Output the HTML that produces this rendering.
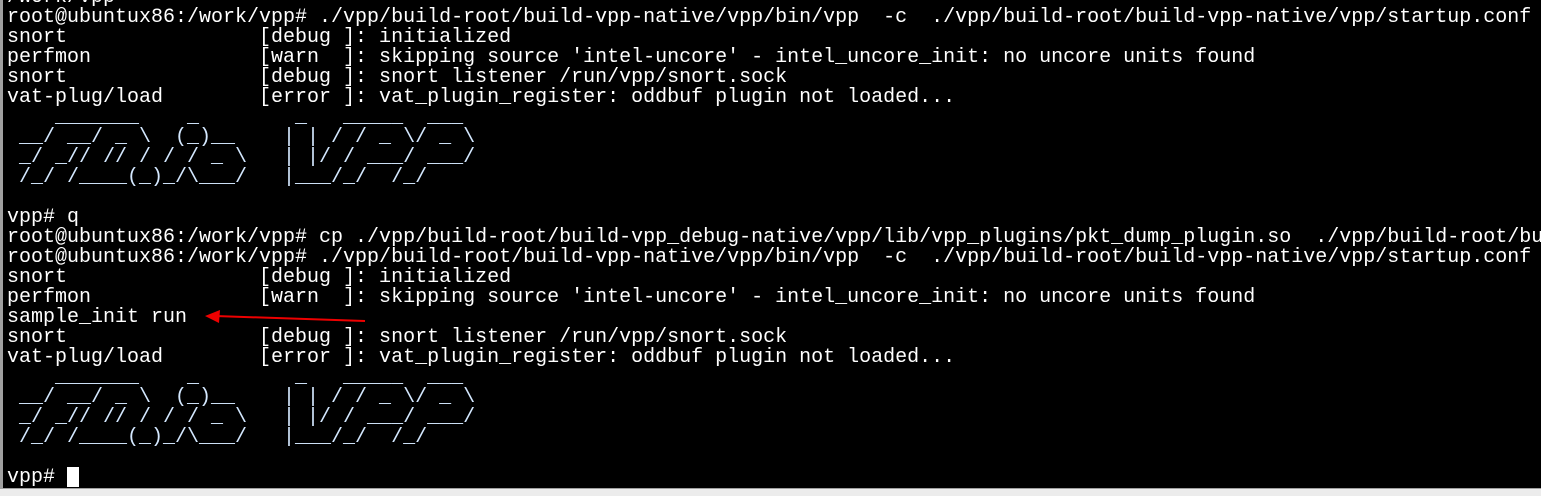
<!DOCTYPE html>
<html><head><meta charset="utf-8"><style>
html,body{margin:0;padding:0;background:#000;width:1541px;height:496px;overflow:hidden;position:relative}
pre{position:absolute;left:7px;top:-12px;margin:0;font-family:"Liberation Mono",monospace;font-size:20px;line-height:20px;color:#fff;white-space:pre}
.a{color:#d4e8ff}
#lb{position:absolute;left:0;top:0;width:3px;height:488px;background:#a0a0a0}
#bb{position:absolute;left:0;top:488px;width:1541px;height:8px;background:#ececec;border-top:1px solid #a0a0a0}
#cur{position:absolute;left:67px;top:467px;width:12px;height:20px;background:#fff}
svg{position:absolute;left:0;top:0}
</style></head><body>
<div id="lb"></div>
<pre>/work/vpp
root@ubuntux86:/work/vpp# ./vpp/build-root/build-vpp-native/vpp/bin/vpp  -c  ./vpp/build-root/build-vpp-native/vpp/startup.conf
snort                [debug ]: initialized
perfmon              [warn  ]: skipping source 'intel-uncore' - intel_uncore_init: no uncore units found
snort                [debug ]: snort listener /run/vpp/snort.sock
vat-plug/load        [error ]: vat_plugin_register: oddbuf plugin not loaded...
<span class="a">    _______    _        _   _____  ___ 
 __/ __/ _ \  (_)__    | | / / _ \/ _ \
 _/ _// // / / / _ \   | |/ / ___/ ___/
 /_/ /____(_)_/\___/   |___/_/  /_/    </span>

vpp# q
root@ubuntux86:/work/vpp# cp ./vpp/build-root/build-vpp_debug-native/vpp/lib/vpp_plugins/pkt_dump_plugin.so  ./vpp/build-root/bu
root@ubuntux86:/work/vpp# ./vpp/build-root/build-vpp-native/vpp/bin/vpp  -c  ./vpp/build-root/build-vpp-native/vpp/startup.conf
snort                [debug ]: initialized
perfmon              [warn  ]: skipping source 'intel-uncore' - intel_uncore_init: no uncore units found
sample_init run
snort                [debug ]: snort listener /run/vpp/snort.sock
vat-plug/load        [error ]: vat_plugin_register: oddbuf plugin not loaded...
<span class="a">    _______    _        _   _____  ___ 
 __/ __/ _ \  (_)__    | | / / _ \/ _ \
 _/ _// // / / / _ \   | |/ / ___/ ___/
 /_/ /____(_)_/\___/   |___/_/  /_/    </span>

vpp# </pre>
<div id="cur"></div>
<svg width="1541" height="496"><line x1="365" y1="321" x2="215" y2="316" stroke="#e00" stroke-width="2"/><polygon points="205,316 220,310 219,323" fill="#e00"/></svg>
<div id="bb"></div>
</body></html>
